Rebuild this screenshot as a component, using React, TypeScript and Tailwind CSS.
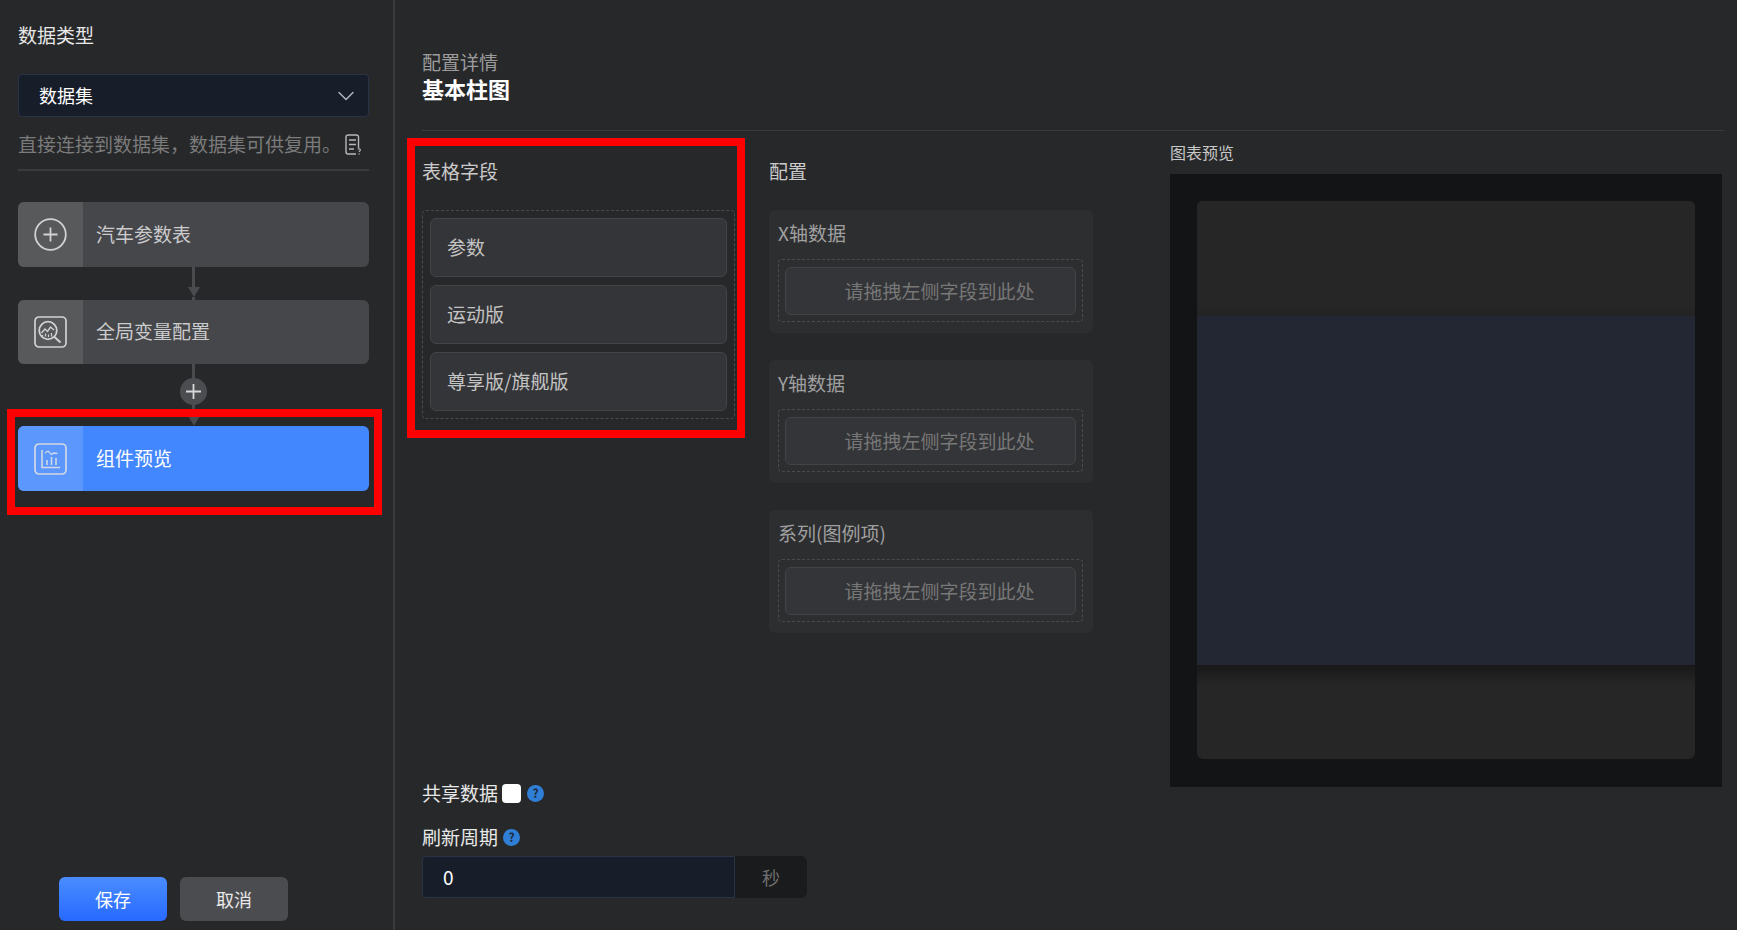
import { ChevronDown } from 'lucide-react';
import type { ReactNode } from 'react';

const font = "font-['Noto_Sans_CJK_SC','Noto_Sans',sans-serif]";

function PlusCircleIcon() {
  return (
    <svg width="33" height="33" viewBox="0 0 33 33" fill="none" stroke="#d2d2d2" strokeWidth="1.8">
      <circle cx="16.5" cy="16.5" r="15.3" />
      <path d="M16.5 9.5v14M9.5 16.5h14" />
    </svg>
  );
}

function SearchChartIcon() {
  return (
    <svg width="33" height="32" viewBox="0 0 33 32" fill="none" stroke="#d2d2d2">
      <rect x="1" y="1" width="31" height="30" rx="4" strokeWidth="1.7" />
      <circle cx="14" cy="14.5" r="8.8" strokeWidth="1.8" />
      <path d="M20.5 21l6 5.5" strokeWidth="2" />
      <path d="M7.5 17l3.5-4 2.5 2.5 3-4.5 3.5 3" strokeWidth="1.4" />
      <path d="M8.5 20v-1M11.5 20.500v-3M14.500 21v-2.500M17.500 20.500v-3.500" strokeWidth="1.2" />
    </svg>
  );
}

function BarChartIcon() {
  return (
    <svg width="33" height="32" viewBox="0 0 33 32" fill="none" stroke="#d2d8e4">
      <rect x="1" y="1" width="31" height="30" rx="4" strokeWidth="1.7" />
      <path d="M8 7v17.500h18" strokeWidth="1.6" />
      <path d="M11 10l3-2 3.500 3.500 2-1.500 4 .500" strokeWidth="1.3" />
      <path d="M13 22v-5M17.500 22v-8M22 22v-7" strokeWidth="1.6" />
    </svg>
  );
}

function DocHelpIcon() {
  return (
    <svg width="17" height="21" viewBox="0 0 17 21" fill="none" stroke="#b8b8b8" strokeWidth="1.4">
      <path d="M13.500 14V3a2 2 0 0 0-2-2H3a2 2 0 0 0-2 2v15a2 2 0 0 0 2 2h8" />
      <path d="M4 6h7M4 10.500h7M4 15h5" />
      <path d="M12.800 15.300c.6-.8 2.600-.6 2.600.7 0 1-1.300 1-1.300 2" strokeWidth="1.100" />
      <path d="M14.100 19.200v1.200" strokeWidth="1.100" />
    </svg>
  );
}

function Arrow() {
  return (
    <svg width="12" height="10" viewBox="0 0 12 10" className="block" fill="#4a4b4f">
      <path d="M0 0h12L6 10z" />
    </svg>
  );
}

function HelpDot() {
  return (
    <span className="flex h-[17px] w-[17px] items-center justify-center rounded-full bg-[#2f7fd6] text-[12px] leading-none font-bold text-[#1d2a3a]">
      ?
    </span>
  );
}

interface NodeProps {
  icon: ReactNode;
  label: string;
  active?: boolean;
  height: string;
}

function FlowNode({ icon, label, active, height }: NodeProps) {
  return (
    <div className={`flex overflow-hidden rounded-md ${height} ${active ? 'bg-[#4387fe] text-white' : 'bg-[#46474b] text-[#cbcbcb]'}`}>
      <div className={`flex w-[65px] shrink-0 items-center justify-center ${active ? 'bg-[#5b97fd]' : 'bg-[#58595b]'}`}>
        {icon}
      </div>
      <div className="flex items-center pb-px pl-[13px] text-[19px]">{label}</div>
    </div>
  );
}

function FieldItem({ label }: { label: string }) {
  return (
    <div className="flex flex-1 items-center rounded-md border border-[#434447] bg-[#343538] pl-4 text-[19px] text-[#c4c4c4]">
      {label}
    </div>
  );
}

function DropCard({ title }: { title: string }) {
  return (
    <div className="h-[123px] w-[324px] rounded-md bg-[#2d2e30] px-[9px] pt-[7px]">
      <div className="h-[31px] text-[19px] leading-[31px] text-[#a0a0a0]">{title}</div>
      <div className="mt-[11px] h-[63px] w-[305px] rounded border border-dashed border-[#4a4b4d] px-[6px] pt-[7px] pb-[6px]">
        <div className="flex h-full items-center justify-center rounded-md border border-[#434447] bg-[#343538] pl-[18px] text-[19px] text-[#777777]">
          请拖拽左侧字段到此处
        </div>
      </div>
    </div>
  );
}

export default function App() {
  return (
    <div className={`flex h-[930px] w-[1737px] overflow-hidden bg-[#27282a] ${font}`}>
      {/* Left: data type + flow */}
      <aside className="flex w-[395px] shrink-0 flex-col border-r-2 border-[#3a3b3d] pr-[24px] pl-[18px]">
        <div className="mt-[21px] h-7 text-[19px] leading-7 text-[#e8e8e8]">数据类型</div>
        <div className="mt-[25px] flex h-[43px] items-center justify-between rounded-sm border border-[#2a3346] bg-[#171d29] pr-[8px] pl-[20px] text-[18px] text-white">
          数据集
          <ChevronDown size={28} strokeWidth={1.2} className="text-[#b8bcc4]" />
        </div>
        <div className="mt-[13px] flex h-7 items-center justify-between pr-[7px] text-[19px] whitespace-nowrap text-[#7b7b7b]">
          直接连接到数据集，数据集可供复用。
          <DocHelpIcon />
        </div>
        <div className="mt-[11px] h-0.5 bg-[#3a3b3d]" />

        <div className="mt-[31px]">
          <FlowNode icon={<PlusCircleIcon />} label="汽车参数表" height="h-[65px]" />
          <div className="flex h-[33px] flex-col items-center">
            <div className="h-[20px] w-[3px] bg-[#4a4b4f]" />
            <Arrow />
            <div className="w-[3px] flex-1 bg-[#4a4b4f]" />
          </div>
          <FlowNode icon={<SearchChartIcon />} label="全局变量配置" height="h-[64px]" />
          <div className="relative flex h-[62px] flex-col items-center">
            <div className="h-[53px] w-[3px] bg-[#4a4b4f]" />
            <Arrow />
            <span className="absolute top-[14px] flex h-[27px] w-[27px] items-center justify-center rounded-full bg-[#4c4d51]">
              <svg width="17" height="17" viewBox="0 0 17 17" stroke="#d8d8d8" strokeWidth="1.800">
                <path d="M8.500 1v15M1 8.500h15" />
              </svg>
            </span>
          </div>
          <div className="relative">
            <FlowNode icon={<BarChartIcon />} label="组件预览" active height="h-[65px]" />
            <div className="pointer-events-none absolute -top-[17px] -right-[13px] -bottom-[24px] -left-[11px] border-8 border-[#ff0000]" />
          </div>
        </div>

        <div className="mt-auto mb-[9px] ml-[41px] flex gap-[13px]">
          <button className="h-[44px] w-[108px] rounded-md bg-gradient-to-b from-[#4a8cff] to-[#2869ff] text-[18px] text-white">
            保存
          </button>
          <button className="h-[44px] w-[108px] rounded-md bg-[#4b4c50] text-[18px] text-[#e8e8e8]">
            取消
          </button>
        </div>
      </aside>

      {/* Right: config details */}
      <main className="flex min-w-0 flex-1 flex-col pr-[13px] pl-[27px]">
        <div className="mt-[50px] h-6 text-[19px] leading-6 text-[#9c9c9c]">配置详情</div>
        <div className="-mt-[2px] h-[32px] text-[22px] leading-[32px] font-bold text-white">基本柱图</div>
        <div className="mt-[26px] h-px bg-[#3a3b3d]" />

        <div className="flex flex-1">
          <div className="flex w-[347px] shrink-0 flex-col">
            <div className="relative mt-[26px] h-7 text-[19px] leading-7 text-[#cbcbcb]">表格字段</div>
            <div className="relative mt-[25px] h-[209px] w-[313px] rounded border border-dashed border-[#4a4b4d]">
              <div className="flex h-full flex-col gap-2 p-[7px]">
                <FieldItem label="参数" />
                <FieldItem label="运动版" />
                <FieldItem label="尊享版/旗舰版" />
              </div>
              <div className="pointer-events-none absolute -top-[73px] -right-[11px] -bottom-[20px] -left-[16px] border-8 border-[#ff0000]" />
            </div>

            <div className="mt-auto mb-[32px]">
              <div className="flex h-7 items-center gap-[4px] text-[19px] leading-7 text-[#e8e8e8]">
                共享数据
                <span className="h-[19px] w-[19px] rounded-sm bg-white" />
                <span className="ml-[2px]">
                  <HelpDot />
                </span>
              </div>
              <div className="mt-[16px] flex h-7 items-center gap-[5px] text-[19px] leading-7 text-[#e8e8e8]">
                刷新周期
                <HelpDot />
              </div>
              <div className="mt-[5px] flex h-[42px] w-[385px]">
                <div className="flex w-[313px] items-center rounded-l-sm border border-[#2a3346] bg-[#171d29] pl-[20px] text-[19px] text-white">
                  0
                </div>
                <div className="flex flex-1 items-center justify-center rounded-r-md bg-[#1a1b1c] text-[18px] text-[#6f6f6f]">
                  秒
                </div>
              </div>
            </div>
          </div>

          <div className="w-[401px] shrink-0">
            <div className="mt-[26px] h-7 text-[19px] leading-7 text-[#cbcbcb]">配置</div>
            <div className="mt-[25px] flex flex-col gap-[27px]">
              <DropCard title="X轴数据" />
              <DropCard title="Y轴数据" />
              <DropCard title="系列(图例项)" />
            </div>
          </div>

          <div className="flex-1">
            <div className="mt-[9px] h-[24px] text-[16px] leading-[24px] text-[#c8c8c8]">图表预览</div>
            <div className="mt-[10px] h-[613px] w-[552px] bg-[#131416] px-[27px] pt-[27px]">
              <div className="flex h-[558px] flex-col overflow-hidden rounded-md bg-[#262626]">
                <div className="h-[115px] bg-gradient-to-b from-[#262626] from-90% to-[#232323]" />
                <div className="h-[349px] bg-[#232633]" />
                <div className="h-[20px] bg-gradient-to-b from-[#181818] to-[#262626]" />
              </div>
            </div>
          </div>
        </div>
      </main>
    </div>
  );
}
